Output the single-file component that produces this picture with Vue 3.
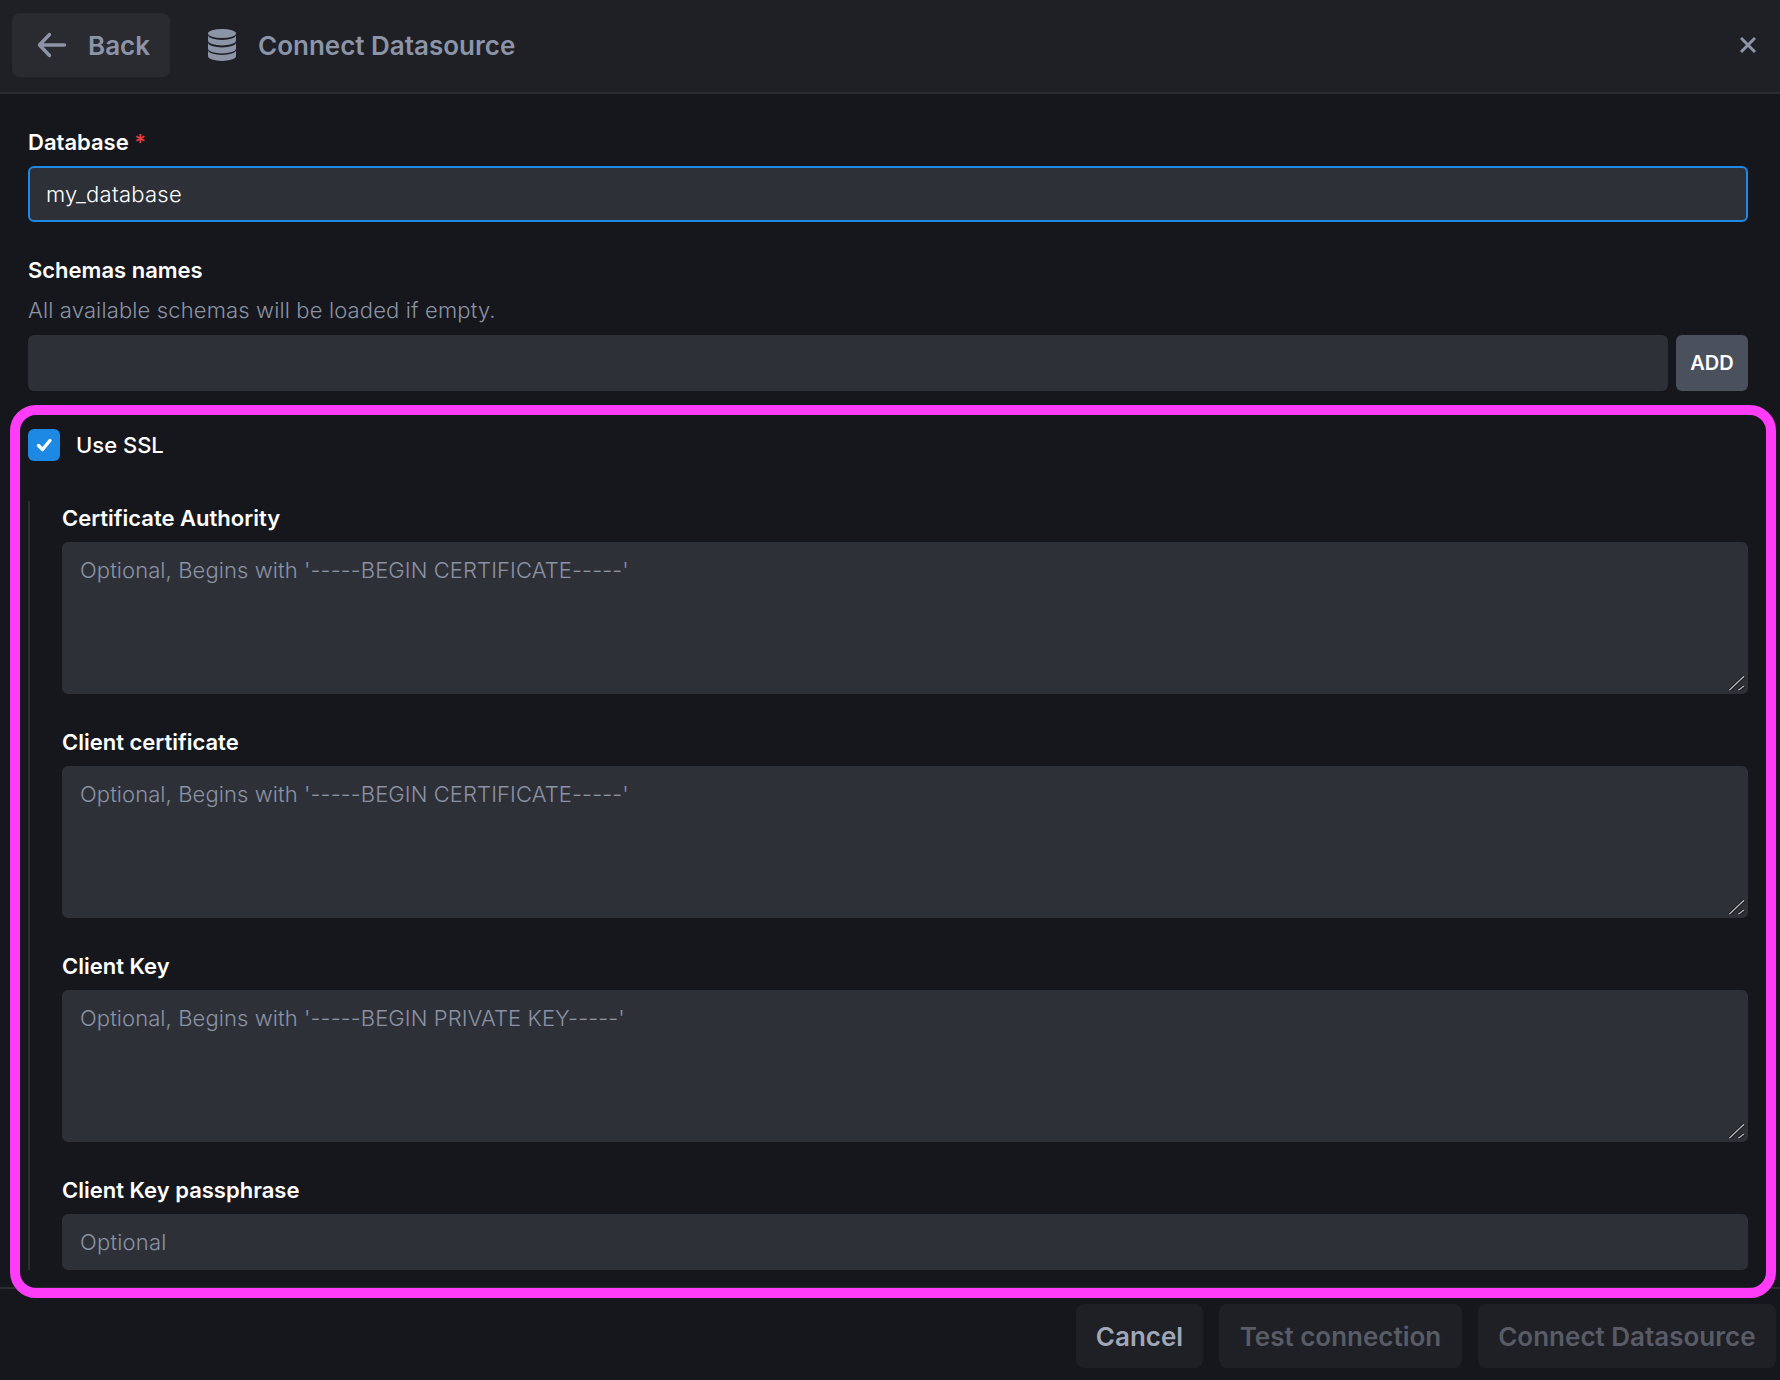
<script setup>
const certFields = [
  { label: 'Certificate Authority', placeholder: "Optional, Begins with '-----BEGIN CERTIFICATE-----'" },
  { label: 'Client certificate', placeholder: "Optional, Begins with '-----BEGIN CERTIFICATE-----'" },
  { label: 'Client Key', placeholder: "Optional, Begins with '-----BEGIN PRIVATE KEY-----'" }
]
</script>

<template>
  <div class="page">
    <header class="header">
      <button class="back" type="button">
        <svg class="back-icon" viewBox="0 0 32 32" fill="none" stroke="currentColor" stroke-width="3.4" stroke-linecap="round" stroke-linejoin="round">
          <path d="M28.5 16H4M13.5 5.5 3.5 16l10 10.5" />
        </svg>
        <span>Back</span>
      </button>
      <svg class="db-icon" viewBox="0 0 28 32" fill="currentColor">
        <ellipse cx="14" cy="4.5" rx="14" ry="4.5" />
        <path d="M0 6A14 5 0 0 0 28 6V11.5A14 5 0 0 1 0 11.5Z" />
        <path d="M0 13.5A14 5 0 0 0 28 13.5V19.5A14 5 0 0 1 0 19.5Z" />
        <path d="M0 21A14 5 0 0 0 28 21V27A14 5 0 0 1 0 27Z" />
      </svg>
      <h1 class="title">Connect Datasource</h1>
      <svg class="close" viewBox="0 0 16 16" fill="none" stroke="currentColor" stroke-width="3">
        <path d="M1 1l14 14M15 1 1 15" />
      </svg>
    </header>

    <main class="body">
      <div class="field">
        <label class="label">Database <span class="req">*</span></label>
        <input class="input focus" type="text" value="my_database" />
      </div>

      <div class="field schemas">
        <label class="label">Schemas names</label>
        <p class="help">All available schemas will be loaded if empty.</p>
        <div class="add-row">
          <input class="input" type="text" />
          <button class="add" type="button">ADD</button>
        </div>
      </div>

      <section class="ssl">
        <div class="check-row">
          <span class="checkbox">
            <svg viewBox="0 0 16 16" fill="none" stroke="#fff" stroke-width="3" stroke-linecap="round" stroke-linejoin="round">
              <path d="M3.1 8.4 6.7 12l6.6-8" />
            </svg>
          </span>
          <span class="check-label">Use SSL</span>
        </div>
        <div class="nested">
          <div v-for="f in certFields" :key="f.label" class="field cert">
            <label class="label">{{ f.label }}</label>
            <div class="area-wrap">
              <textarea class="input area" :placeholder="f.placeholder"></textarea>
              <svg class="grip" viewBox="0 0 18 18" fill="none" stroke-linecap="butt">
                <path d="M2.3 17.3 17 3.3M11.3 17.3 17 13" stroke="#111216" stroke-width="3.2" />
                <path d="M2.3 17.3 17 3.3M11.3 17.3 17 13" stroke="#b4b4b8" stroke-width="1.4" />
              </svg>
            </div>
          </div>
          <div class="field">
            <label class="label">Client Key passphrase</label>
            <input class="input short" type="text" placeholder="Optional" />
          </div>
        </div>
      </section>
    </main>

    <footer class="footer">
      <button class="fbtn cancel" type="button">Cancel</button>
      <button class="fbtn off" type="button">Test connection</button>
      <button class="fbtn off" type="button">Connect Datasource</button>
    </footer>
  </div>
</template>

<style>
html, body { margin: 0; background: #16171c; }
</style>

<style scoped>
* { box-sizing: border-box; }
.page {
  width: 1780px;
  height: 1380px;
  display: flex;
  flex-direction: column;
  background: #16171c;
  font-family: Inter, "Liberation Sans", sans-serif;
  color: #fff;
  overflow: hidden;
}
.header {
  height: 94px;
  flex: none;
  display: flex;
  align-items: center;
  background: #1f2025;
  border-bottom: 2px solid #2c2d32;
  padding: 0 24px 2px 12px;
}
.back {
  width: 158px;
  height: 64px;
  border: 0;
  border-radius: 8px;
  background: #2a2b31;
  color: #8c94a8;
  font: 600 26px Inter, sans-serif;
  display: flex;
  align-items: center;
  gap: 20px;
  padding: 0 0 0 24px;
}
.back-icon { width: 32px; height: 32px; flex: none; }
.db-icon { width: 28px; height: 32px; margin-left: 38px; color: #8c94a8; flex: none; }
.title {
  margin: 0 0 0 22px;
  font-size: 26px;
  font-weight: 600;
  color: #8c94a8;
  flex: 1;
}
.close { width: 16px; height: 16px; color: #8c94a8; flex: none; }

.body {
  flex: 1;
  padding: 34px 32px 0 28px;
  display: flex;
  flex-direction: column;
}
.field { display: flex; flex-direction: column; }
.label {
  font-size: 22px;
  font-weight: 600;
  line-height: 28px;
  margin-bottom: 10px;
  color: #fff;
}
.req { color: #e53e3e; }
.input {
  width: 100%;
  height: 56px;
  border: 0;
  outline: 0;
  border-radius: 6px;
  background: #2e3038;
  color: #fff;
  font: 350 22px Inter, sans-serif;
  letter-spacing: 0.095px;
  padding: 0 18px;
  display: block;
}
.input::placeholder { color: #8a93a4; opacity: 1; }
.focus { border: 2px solid #1e88e5; padding: 0 16px; letter-spacing: 0.28px; }
.short { letter-spacing: 0.22px; }
.schemas { margin-top: 34px; }
.schemas .label { margin-bottom: 12px; }
.help {
  margin: 0 0 11px;
  font-size: 22px;
  font-weight: 350;
  letter-spacing: 0.14px;
  line-height: 28px;
  color: #8a93a4;
}
.add-row { display: flex; gap: 8px; }
.add-row .input { flex: 1; }
.add {
  width: 72px;
  height: 56px;
  flex: none;
  border: 0;
  border-radius: 6px;
  background: #4a505c;
  color: #fff;
  font: 600 20px Inter, sans-serif;
  padding: 0;
}
.ssl {
  position: relative;
  margin-top: 38px;
}
.ssl::after {
  content: "";
  position: absolute;
  left: -18px;
  top: -24px;
  right: -28px;
  bottom: -28px;
  border: 10px solid #ff3cf7;
  border-radius: 26px;
  pointer-events: none;
}
.check-row { display: flex; align-items: center; gap: 16px; height: 32px; }
.checkbox {
  width: 32px;
  height: 32px;
  border-radius: 6px;
  background: #1e88e5;
  display: flex;
  align-items: center;
  justify-content: center;
}
.checkbox svg { width: 18px; height: 18px; }
.check-label { font-size: 22px; font-weight: 500; }
.nested {
  margin-top: 40px;
  border-left: 2px solid #2c2d32;
  padding: 3px 0 0 32px;
}
.cert { margin-bottom: 34px; }
.area-wrap { position: relative; }
.area {
  height: 152px;
  padding: 14px 18px;
  line-height: 28px;
  resize: none;
}
.grip {
  position: absolute;
  right: 3px;
  bottom: 3px;
  width: 18px;
  height: 18px;
  pointer-events: none;
}
.footer {
  margin-top: 0;
  height: 93px;
  flex: none;
  border-top: 2px solid #2c2d32;
  display: flex;
  justify-content: flex-end;
  gap: 16px;
  padding: 15px 4px 0 0;
}
.fbtn {
  height: 64px;
  border: 0;
  border-radius: 8px;
  background: #1f2025;
  font: 600 26px Inter, sans-serif;
  padding: 0 20.5px;
}
.fbtn.cancel { color: #a0a8b8; padding: 0 20px; }
.off { color: #585c66; }
</style>
